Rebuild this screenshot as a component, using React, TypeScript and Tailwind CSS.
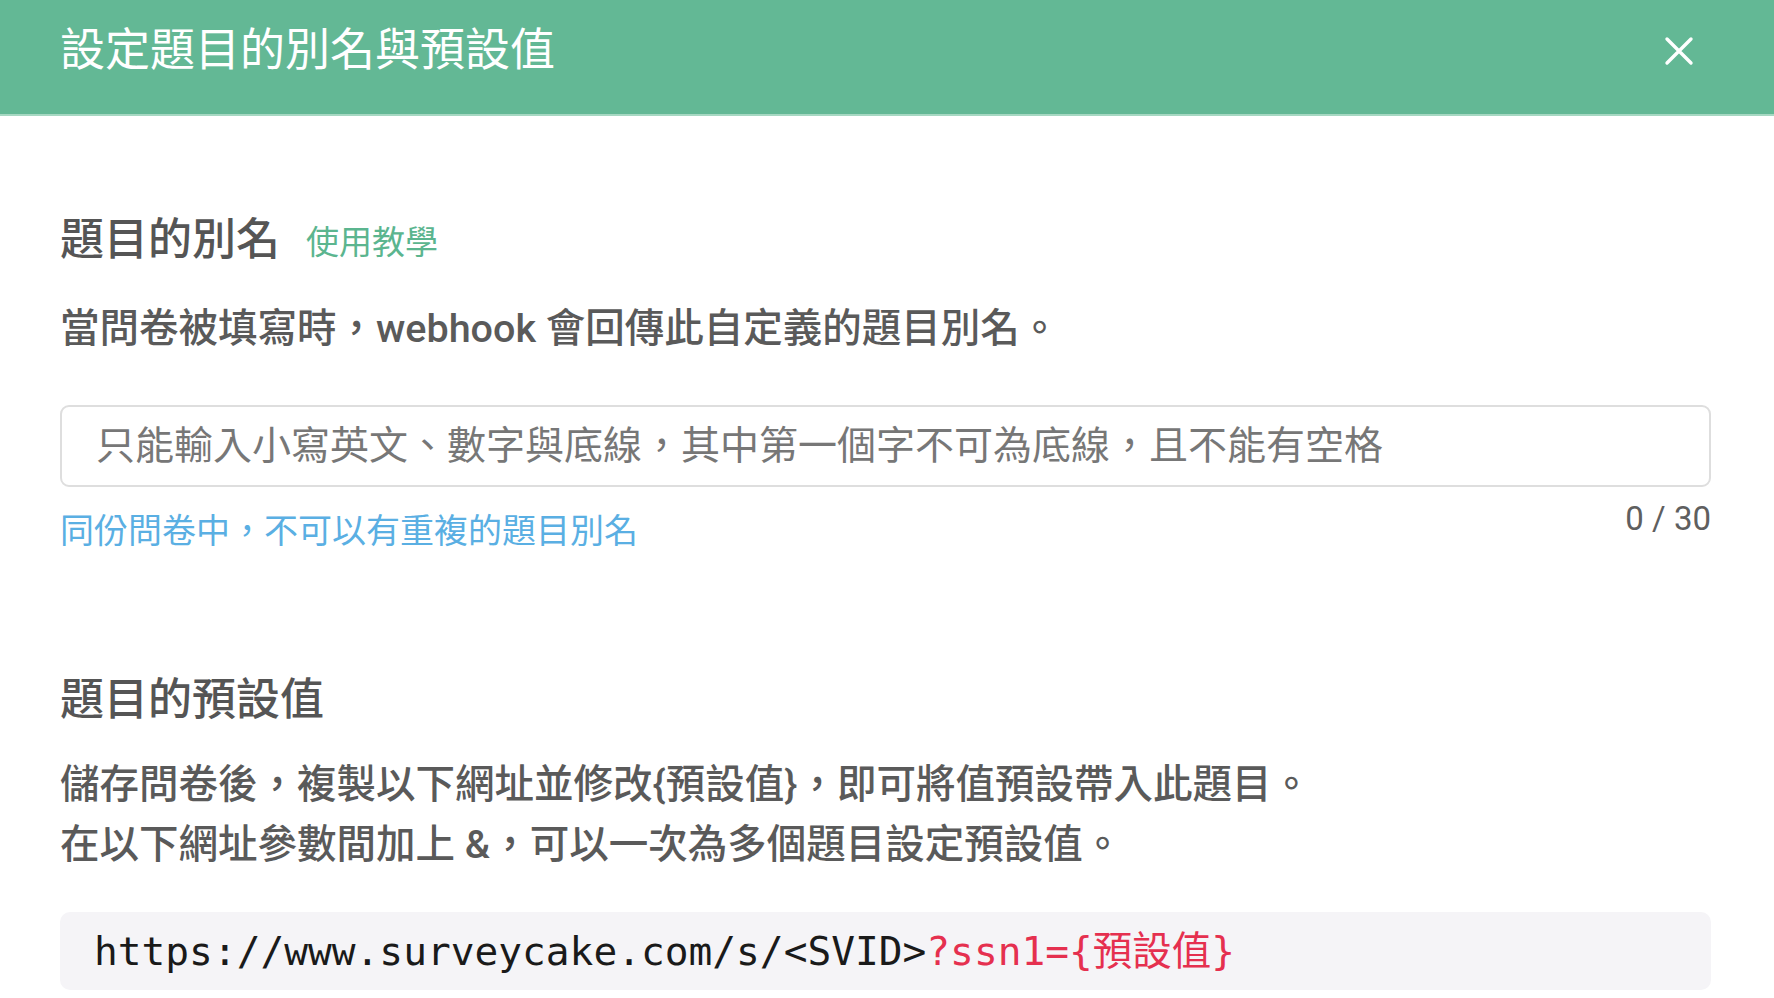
import React from "react";

export default function App() {
  const cjk = { fontFamily: 'Roboto, "Noto Sans CJK TC", "Noto Sans", sans-serif' };
  return (
    <div className="w-[1774px] h-[998px] overflow-hidden bg-white" style={cjk}>
      <div className="h-[116px] bg-[#63b895] flex items-center justify-between pl-[60px] pr-[80px] pb-[13px] border-b-2 border-[#a6d8c2]">
        <h1 className="text-[45px] leading-[45px] text-white font-normal">設定題目的別名與預設值</h1>
        <svg width="30" height="30" viewBox="0 0 30 30">
          <path d="M3 3 L27 27 M27 3 L3 27" stroke="white" strokeWidth="3.4" strokeLinecap="round" />
        </svg>
      </div>
      <div className="pl-[60px] pr-[63px]">
        <div className="mt-[102px] flex items-center gap-[26px]">
          <h2 className="text-[44px] leading-[44px] text-[#555555] font-medium">題目的別名</h2>
          <span className="text-[33px] leading-[33px] text-[#5bb58f] mt-[4px]">使用教學</span>
        </div>
        <p className="mt-[47px] text-[39.5px] leading-[40px] text-[#5a5a5a] font-medium">
          當問卷被填寫時，webhook 會回傳此自定義的題目別名。
        </p>
        <div className="mt-[56px] h-[82px] rounded-[9px] border-2 border-[#dedede] flex items-center pl-[34px]">
          <span className="text-[39px] leading-[40px] text-[#777777]">
            只能輸入小寫英文、數字與底線，其中第一個字不可為底線，且不能有空格
          </span>
        </div>
        <div className="flex justify-between items-start">
          <span className="mt-[27px] text-[34px] leading-[34px] text-[#5aafe3]">同份問卷中，不可以有重複的題目別名</span>
          <span className="mt-[15px] text-[33px] leading-[33px] text-[#5f5f5f]">0 / 30</span>
        </div>
        <h2 className="mt-[130px] text-[44px] leading-[44px] text-[#555555] font-medium">題目的預設值</h2>
        <div className="mt-[33px] text-[39.5px] leading-[60px] text-[#5a5a5a] font-medium">
          <p>儲存問卷後，複製以下網址並修改{"{"}預設值{"}"}，即可將值預設帶入此題目。</p>
          <p>在以下網址參數間加上 &amp;，可以一次為多個題目設定預設值。</p>
        </div>
        <div className="mt-[37px] h-[78px] rounded-[10px] bg-[#f5f4f7] flex items-center pl-[34px]">
          <span
            className="text-[39.5px] leading-[40px] text-[#1a1a1a] whitespace-pre"
            style={{ fontFamily: '"DejaVu Sans Mono", "Liberation Mono", "Noto Sans CJK TC", monospace' }}
          >
            https://www.surveycake.com/s/&lt;SVID&gt;<span className="text-[#e5304f]">?ssn1={"{"}預設值{"}"}</span>
          </span>
        </div>
      </div>
    </div>
  );
}
